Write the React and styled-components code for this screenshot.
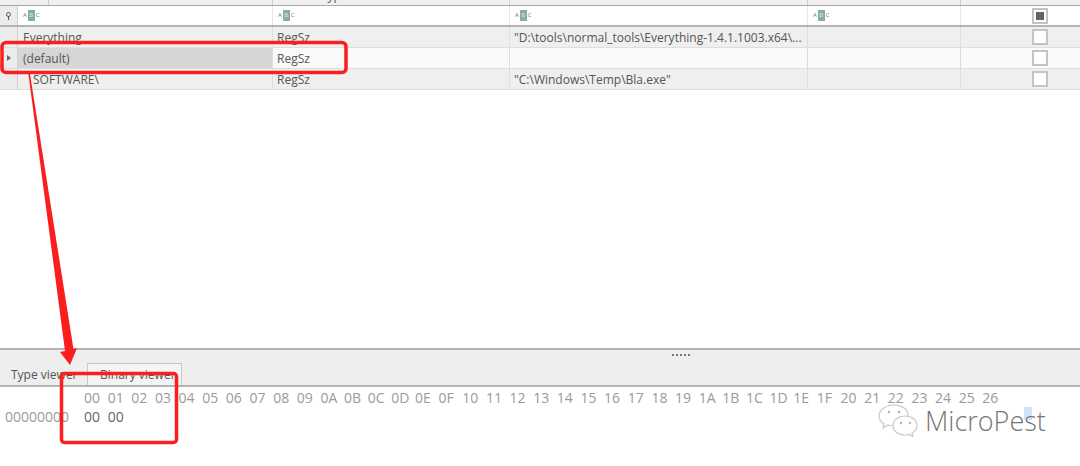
import React from 'react'
import styled, { createGlobalStyle } from 'styled-components'

const columns = '18px 255px 237px 298px 153px 119px'
const hexHeaders = Array.from({ length: 39 }, (_, index) =>
  index.toString(16).toUpperCase().padStart(2, '0'),
)

const rows = [
  { name: 'Everything', type: 'RegSz', value: '"D:\\tools\\normal_tools\\Everything-1.4.1.1003.x64\\...' },
  { name: '(default)', type: 'RegSz', value: '', selected: true },
  { name: 'SOFTWARE\\', type: 'RegSz', value: '"C:\\Windows\\Temp\\Bla.exe"', indent: true },
]

const GlobalStyle = createGlobalStyle`
  html, body {
    margin: 0;
    padding: 0;
    background: #fff;
  }
  body {
    font-family: "Open Sans", "Liberation Sans", sans-serif;
  }
`

const Page = styled.div`
  position: relative;
  display: flex;
  flex-direction: column;
  width: 1080px;
  height: 466px;
  overflow: hidden;
  background: #fff;
`

const HeaderStrip = styled.div`
  display: grid;
  grid-template-columns: ${columns};
  height: 5px;
  background: #f0f0f0;
  border-bottom: 1px solid #a8a8a8;
`

const HeaderCell = styled.div`
  display: flex;
  align-items: flex-end;
  overflow: hidden;
  padding-left: 48px;
  font-size: 12px;
  line-height: 12px;
  color: #555;
  border-right: 1px solid #cfcfcf;
  box-sizing: border-box;
  span {
    margin-bottom: 3px;
  }
`

const FilterRow = styled.div`
  display: grid;
  grid-template-columns: ${columns};
  height: 19px;
  background: #fff;
  border-bottom: 2px solid #b4b4b4;
`

const FilterCell = styled.div`
  display: flex;
  align-items: center;
  box-sizing: border-box;
  padding-left: 5px;
  border-right: 1px solid #e6e6e6;
`

const PinCell = styled.div`
  display: flex;
  align-items: center;
  justify-content: center;
  background: #ececec;
  border-right: 1px solid #cfcfcf;
`

const AbcIcon = styled.div`
  display: flex;
  align-items: center;
  font-size: 6px;
  line-height: 11px;
  color: #777;
  b {
    width: 7px;
    margin: 0 1px;
    text-align: center;
    font-weight: 400;
    color: #dcebe5;
    background: #85b09f;
  }
`

const CheckCell = styled.div`
  display: flex;
  align-items: center;
  justify-content: flex-end;
  padding-right: 32px;
`

const CheckBox = styled.div`
  display: flex;
  align-items: center;
  justify-content: center;
  box-sizing: border-box;
  width: 16px;
  height: 16px;
  background: #fff;
  border: 2px solid #c4c4c4;
  &::after {
    content: '';
    display: ${({ $checked }) => ($checked ? 'block' : 'none')};
    width: 8px;
    height: 8px;
    background: #666;
  }
`

const Row = styled.div`
  display: grid;
  grid-template-columns: ${columns};
  height: 20px;
  background: ${({ $selected }) => ($selected ? '#fafafa' : '#efefef')};
  border-bottom: 1px solid #dedede;
`

const Indicator = styled.div`
  display: flex;
  align-items: center;
  justify-content: center;
  background: #ececec;
  border-right: 1px solid #cfcfcf;
`

const Arrowhead = styled.div`
  border-left: 4px solid #666;
  border-top: 3.5px solid transparent;
  border-bottom: 3.5px solid transparent;
`

const Cell = styled.div`
  display: flex;
  align-items: center;
  box-sizing: border-box;
  padding-left: ${({ $pad }) => $pad || 4}px;
  font-size: 12px;
  color: #555;
  white-space: nowrap;
  overflow: hidden;
  background: ${({ $fill }) => $fill || 'transparent'};
  border-right: 1px solid #dedede;
`

const Spacer = styled.div`
  flex: 1;
`

const ViewerBand = styled.div`
  display: flex;
  flex-direction: column;
  box-sizing: border-box;
  height: 39px;
  background: #eee;
  border-top: 2px solid #b4b4b4;
  border-bottom: 2px solid #b4b4b4;
`

const Grip = styled.div`
  display: flex;
  gap: 2px;
  height: 13px;
  padding: 4px 0 0 672px;
  box-sizing: border-box;
  i {
    width: 2px;
    height: 2px;
    background: #777;
  }
`

const Tabs = styled.div`
  display: flex;
  flex: 1;
  align-items: stretch;
`

const Tab = styled.div`
  display: flex;
  align-items: center;
  box-sizing: border-box;
  width: ${({ $active }) => ($active ? '95px' : '87px')};
  padding-left: ${({ $active }) => ($active ? '12px' : '11px')};
  font-size: 12px;
  color: #555;
  background: ${({ $active }) => ($active ? '#f4f4f4' : 'transparent')};
  border: ${({ $active }) => ($active ? '1px solid #c8c8c8' : '0')};
  border-bottom: 0;
`

const HexView = styled.div`
  display: grid;
  flex: none;
  box-sizing: border-box;
  height: 79px;
  grid-template-columns: 84px repeat(39, 23.65px);
  grid-auto-rows: 19px;
  align-content: start;
  padding-top: 1px;
  font-size: 14px;
  line-height: 19px;
  color: #9a9a9a;
`

const HexOffset = styled.div`
  grid-column: 1;
  padding-left: 5px;
`

const HexByte = styled.div`
  color: ${({ $value }) => ($value ? '#666' : 'inherit')};
`

const Overlay = styled.svg`
  position: absolute;
  top: 0;
  left: 0;
  pointer-events: none;
`

const Watermark = styled.div`
  position: absolute;
  top: 403px;
  left: 877px;
  display: flex;
  align-items: center;
  gap: 6px;
`

const WatermarkText = styled.span`
  margin-top: 2px;
  font-size: 27px;
  font-weight: 300;
  line-height: 24px;
  color: #777;
  text-shadow: 0 0 1px #fff;
`

const Highlight = styled.div`
  position: absolute;
  top: 407px;
  left: 1024px;
  width: 8px;
  height: 13px;
  background: #cfe2fb;
`

const PinIcon = () => (
  <svg width="7" height="8" viewBox="0 0 7 8">
    <circle cx="3.500" cy="2.500" r="2" fill="none" stroke="#555" />
    <path d="M3 4h1v4H3z" fill="#555" />
  </svg>
)

const WeChatIcon = () => (
  <svg width="42" height="34" viewBox="0 0 42 34" fill="#fff" stroke="#c9c9c9" strokeWidth="1.2">
    <path d="M17 2C9 2 2 7 2 13c0 4 2 6 5 8l-1 4 5-3c2 .6 4 .6 6 .6C25 22.600 31 18 31 12 31 6 25 2 17 2z" />
    <path d="M28 13c-7 0-12 4-12 9.500S21 32 28 32c1.500 0 3-.2 4-.6l4 2.200-1-3.300c3-2 5-4.800 5-7.800C40 17 35 13 28 13z" />
    <g fill="#b5b5b5" stroke="none">
      <circle cx="12" cy="9" r="1.300" />
      <circle cx="22" cy="9" r="1.300" />
      <circle cx="24" cy="20" r="1.200" />
      <circle cx="33" cy="20" r="1.200" />
    </g>
  </svg>
)

const App = () => (
  <Page>
    <GlobalStyle />
    <HeaderStrip>
      <HeaderCell />
      <HeaderCell />
      <HeaderCell>
        <span>Type</span>
      </HeaderCell>
      <HeaderCell />
      <HeaderCell />
      <div />
    </HeaderStrip>
    <FilterRow>
      <PinCell>
        <PinIcon />
      </PinCell>
      {[0, 1, 2, 3].map(column => (
        <FilterCell key={column}>
          <AbcIcon>
            A<b>B</b>C
          </AbcIcon>
        </FilterCell>
      ))}
      <CheckCell>
        <CheckBox $checked />
      </CheckCell>
    </FilterRow>
    {rows.map(({ name, type, value, selected, indent }) => (
      <Row key={name} $selected={selected}>
        <Indicator>{selected && <Arrowhead />}</Indicator>
        <Cell $pad={indent ? 15 : 5} $fill={selected ? '#d6d6d6' : null}>
          {name}
        </Cell>
        <Cell>{type}</Cell>
        <Cell>{value}</Cell>
        <Cell />
        <CheckCell>
          <CheckBox />
        </CheckCell>
      </Row>
    ))}
    <Spacer />
    <ViewerBand>
      <Grip>
        {[0, 1, 2, 3, 4].map(dot => (
          <i key={dot} />
        ))}
      </Grip>
      <Tabs>
        <Tab>Type viewer</Tab>
        <Tab $active>Binary viewer</Tab>
      </Tabs>
    </ViewerBand>
    <HexView>
      <div />
      {hexHeaders.map(header => (
        <HexByte key={header}>{header}</HexByte>
      ))}
      <HexOffset>00000000</HexOffset>
      <HexByte $value>00</HexByte>
      <HexByte $value>00</HexByte>
    </HexView>
    <Highlight />
    <Watermark>
      <WeChatIcon />
      <WatermarkText>MicroPest</WatermarkText>
    </Watermark>
    <Overlay width="1080" height="466" viewBox="0 0 1080 466">
      <g fill="none" stroke="#fb1e1e" strokeWidth="3.500">
        <rect x="2" y="42.500" width="344" height="30" rx="4" />
        <rect x="61.500" y="373.500" width="115" height="69" rx="3" />
      </g>
      <path d="M28 71 L29.500 71 L73.500 349 L77 348 L70 365 L60 352 L65 351 Z" fill="#fb1e1e" />
    </Overlay>
  </Page>
)

export default App
